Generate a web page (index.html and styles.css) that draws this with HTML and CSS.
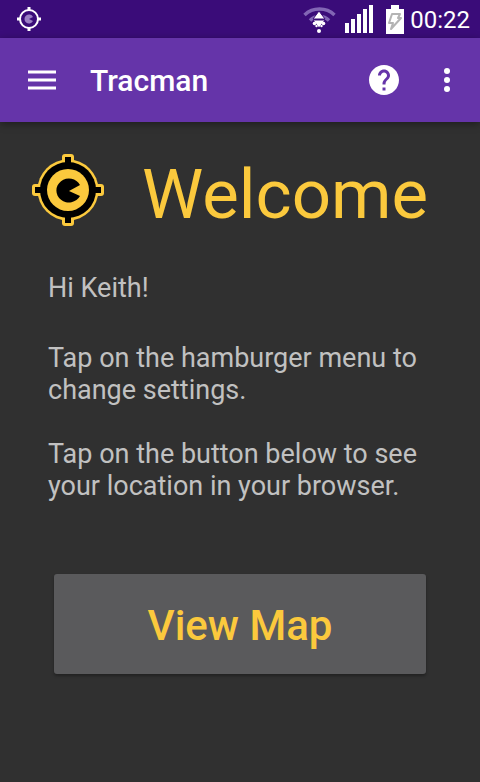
FILE: index.html
```html
<!DOCTYPE html>
<html lang="en">
<head>
  <meta charset="utf-8">
  <meta name="viewport" content="width=device-width, initial-scale=1">
  <title>Tracman</title>
  <link rel="stylesheet" href="styles.css">
</head>
<body>
  <div class="status-bar">
    <svg class="status-tracker" width="26" height="26" viewBox="0 0 26 26" aria-hidden="true">
      <circle cx="13" cy="13" r="9" fill="none" stroke="#fff" stroke-width="2"/>
      <path d="M13 1v4M13 21v4M1 13h4M21 13h4" stroke="#fff" stroke-width="3"/>
      <path d="M13 13l4-2a4.500 4.500 0 1 0 0 4z" fill="#9b80c4"/>
    </svg>
    <svg class="status-wifi" width="34" height="28" viewBox="0 0 34 28" aria-hidden="true">
      <path d="M1.500 10a22 22 0 0 1 30 0M7 15.500a13.500 13.500 0 0 1 19 0" fill="none" stroke="#8266b5" stroke-width="3.500"/>
      <path d="M16 6l6 8H10zM16 23l-6-8h12z" fill="#fff" stroke="#3a0c79" stroke-width="1"/>
      <g fill="#fff">
        <circle cx="11.500" cy="18.500" r="1.800"/>
        <circle cx="20.500" cy="18.500" r="1.800"/>
        <circle cx="13.500" cy="21" r="1.200"/>
        <circle cx="18.500" cy="21" r="1.200"/>
        <circle cx="16" cy="26" r="2"/>
      </g>
    </svg>
    <svg class="status-signal" width="28" height="28" viewBox="0 0 28 28" aria-hidden="true">
      <path d="M0 18h4v10H0zM6 14h4v14H6zM12 9h4v19h-4zM18 4h4v24h-4zM24 0h4v28h-4z" fill="#fff"/>
    </svg>
    <svg class="status-battery" width="18" height="29" viewBox="0 0 18 29" aria-hidden="true">
      <path d="M5 0h8v4h5v25H0V4h5z" fill="#fff"/>
      <path d="M6 9h8l-2 4h3L5 24l2-6H3z" fill="#fff" stroke="#b4b4b4" stroke-width="2" stroke-linejoin="round"/>
    </svg>
    <time class="clock">00:22</time>
  </div>

  <header class="toolbar">
    <button class="icon-button" type="button" aria-label="Open menu">
      <svg width="28" height="20" viewBox="0 0 28 20" aria-hidden="true">
        <path d="M0 0h28v4H0zM0 8h28v4H0zM0 16h28v4H0z" fill="#b59ad8"/>
        <path d="M0 1h28v2H0zM0 9h28v2H0zM0 17h28v2H0z" fill="#fff"/>
      </svg>
    </button>
    <h1 class="toolbar-title">Tracman</h1>
    <button class="icon-button" type="button" aria-label="Help">
      <svg width="36" height="36" viewBox="0 0 24 24" aria-hidden="true">
        <path d="M12 2C6.480 2 2 6.480 2 12s4.480 10 10 10 10-4.480 10-10S17.520 2 12 2zm1 17h-2v-2h2v2zm2.070-7.750l-.9.920C13.450 12.900 13 13.500 13 15h-2v-.5c0-1.100.450-2.100 1.170-2.830l1.240-1.260c.370-.360.590-.860.590-1.410 0-1.100-.9-2-2-2s-2 .9-2 2H8c0-2.210 1.790-4 4-4s4 1.790 4 4c0 .880-.360 1.680-.930 2.250z" fill="#fff"/>
      </svg>
    </button>
    <button class="icon-button icon-button-more" type="button" aria-label="More options">
      <svg width="6" height="24" viewBox="0 0 6 24" aria-hidden="true">
        <g fill="#fff"><circle cx="3" cy="3" r="3"/><circle cx="3" cy="12" r="3"/><circle cx="3" cy="21" r="3"/></g>
      </svg>
    </button>
  </header>

  <main class="content">
    <div class="hero">
      <svg width="72" height="72" viewBox="0 0 72 72" role="img" aria-label="Tracman logo">
        <g fill="#fbc93d">
          <circle cx="36" cy="36" r="30.500"/>
          <rect x="30" y="0" width="12" height="72" rx="3"/>
          <rect x="0" y="30" width="72" height="12" rx="3"/>
        </g>
        <circle cx="36" cy="36" r="28"/>
        <path d="M33 3h6v66h-6zM3 33h66v6H3z"/>
        <circle cx="36" cy="36" r="21" fill="#fbc93d"/>
        <path d="M37 37l11-6a12.500 12 0 1 0 0 11z"/>
      </svg>
      <h2 class="hero-title">Welcome</h2>
    </div>
    <div class="message">
      <p class="greeting">Hi Keith!</p>
      <p>Tap on the hamburger menu to change settings.</p>
      <p>Tap on the button below to see your location in your browser.</p>
    </div>
    <button class="map-button" type="button">View Map</button>
  </main>
</body>
</html>
```
FILE: styles.css
```css
* {
  box-sizing: border-box;
}

body {
  margin: 0;
  min-height: 100vh;
  background: #303030;
  color: #c1c1c1;
  font-family: Roboto, "Liberation Sans", sans-serif;
}

h1,
h2,
p {
  margin: 0;
}

svg {
  display: block;
  flex: none;
}

button {
  border: 0;
  font-family: inherit;
  cursor: pointer;
}

.status-bar {
  display: flex;
  align-items: center;
  height: 38px;
  padding: 0 10px 0 16px;
  background: #3a0c79;
  color: #fff;
}

.status-wifi {
  margin-left: auto;
}

.status-signal {
  margin-left: 8px;
}

.status-battery {
  margin-left: 13px;
}

.clock {
  padding-top: 2px;
  margin-left: 6px;
  font-size: 24px;
  line-height: 28px;
}

.toolbar {
  display: flex;
  align-items: center;
  height: 84px;
  padding: 0 18px;
  background: #6534a9;
  color: #fff;
  box-shadow: 0 2px 8px rgba(0, 0, 0, 0.4);
}

.icon-button {
  display: flex;
  align-items: center;
  justify-content: center;
  height: 48px;
  padding: 0 10px;
  background: none;
}

.icon-button-more {
  margin-left: 20px;
  padding: 0 12px;
}

.toolbar-title {
  flex: 1;
  padding-top: 2px;
  margin-left: 24px;
  font-size: 30px;
  font-weight: 500;
  line-height: 36px;
}

.content {
  padding: 32px;
}

.hero {
  display: flex;
  align-items: flex-start;
  gap: 38px;
}

.hero-title {
  color: #fbc93d;
  font-size: 69px;
  font-weight: 400;
  line-height: 82px;
}

.message {
  display: grid;
  gap: 32px;
  padding: 36px 16px 0;
  font-size: 27px;
  line-height: 32px;
}

.greeting {
  padding-bottom: 6px;
}

.map-button {
  display: block;
  width: calc(100% - 44px);
  height: 100px;
  padding: 2px 0 0;
  margin: 72px auto 0;
  border-radius: 3px;
  background: #5a5a5c;
  color: #fbc93d;
  font-size: 42px;
  font-weight: 500;
  box-shadow: 0 2px 3px rgba(0, 0, 0, 0.3);
}
```
